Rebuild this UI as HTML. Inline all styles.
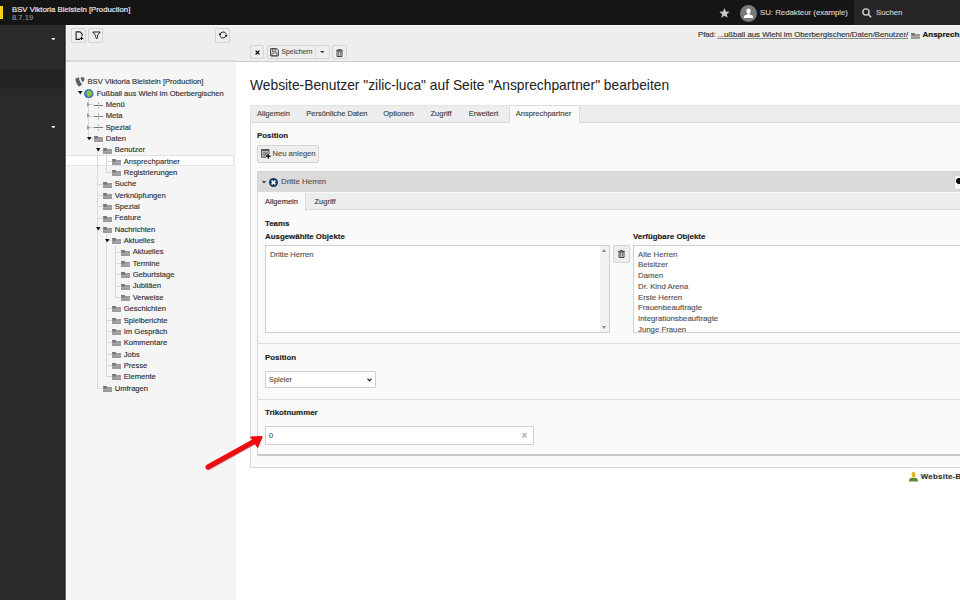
<!DOCTYPE html>
<html><head><meta charset="utf-8">
<style>
*{box-sizing:border-box;margin:0;padding:0}
html,body{width:960px;height:600px;overflow:hidden;background:#fff;font-family:"Liberation Sans",sans-serif;font-size:8px;color:#333;position:relative}
.a{position:absolute}
.t{position:absolute;white-space:nowrap;-webkit-text-stroke:0.15px currentColor}
</style></head><body>
<div class="a" style="left:0px;top:0px;width:960px;height:25px;background:#151515"></div>
<div class="a" style="left:0px;top:6px;width:3px;height:13px;background:#f4d21b"></div>
<div class="t" style="left:12px;top:5.74px;font-size:7.75px;line-height:7.75px;color:#f0f0f0;font-weight:normal;">BSV Viktoria Bielstein [Production]</div>
<div class="t" style="left:12px;top:13.57px;font-size:7.6px;line-height:7.6px;color:#8f8f8f;font-weight:normal;">8.7.19</div>
<svg class="a" style="left:719px;top:8px" width="11" height="10" viewBox="0 0 24 22"><path d="M12 0l3.1 7.6 8.2.6-6.3 5.3 2 8-7-4.4-7 4.4 2-8L.7 8.2l8.2-.6z" fill="#c8c8c8"/></svg>
<svg class="a" style="left:740px;top:5px" width="17" height="17" viewBox="0 0 16 16"><circle cx="8" cy="8" r="8" fill="#7a7a7a"/><path d="M8 3.2c1.3 0 2 .9 2 2.2 0 1.2-.6 2.4-1.1 2.9v.6c2 .4 3.4 1 3.4 2v1.4H3.7v-1.4c0-1 1.4-1.6 3.4-2v-.6C6.6 7.8 6 6.6 6 5.4 6 4.1 6.7 3.2 8 3.2z" fill="#fff"/></svg>
<div class="t" style="left:760px;top:9.20px;font-size:7.8px;line-height:7.8px;color:#cfcfcf;font-weight:normal;">SU: Redakteur (example)</div>
<div class="a" style="left:854px;top:0px;width:106px;height:25px;background:#262626"></div>
<svg class="a" style="left:862px;top:8px" width="10" height="10" viewBox="0 0 10 10"><circle cx="4" cy="4" r="3.1" fill="none" stroke="#d0d0d0" stroke-width="1.4"/><path d="M6.2 6.2L9.2 9.2" stroke="#d0d0d0" stroke-width="1.6"/></svg>
<div class="t" style="left:876px;top:9.20px;font-size:7.8px;line-height:7.8px;color:#cfcfcf;font-weight:normal;">Suchen</div>
<div class="a" style="left:0px;top:25px;width:66px;height:575px;background:#2a2a2a"></div>
<div class="a" style="left:0px;top:69px;width:66px;height:20px;background:#232323"></div>
<div class="a" style="left:64px;top:25px;width:1px;height:575px;background:#1e1e1e"></div>
<div class="a" style="left:65px;top:25px;width:1px;height:575px;background:#6a6a6a"></div>
<svg class="a" style="left:50.8px;top:37.7px" width="4.7" height="2.5" viewBox="0 0 5 3"><path d="M0 0h5L2.5 3z" fill="#fff"/></svg>
<svg class="a" style="left:50.8px;top:125.6px" width="4.7" height="2.5" viewBox="0 0 5 3"><path d="M0 0h5L2.5 3z" fill="#fff"/></svg>
<div class="a" style="left:66px;top:25px;width:170px;height:575px;background:#f5f5f5"></div>
<div class="a" style="left:66px;top:25px;width:170px;height:37px;background:#eeeeee;border-bottom:2px solid #d8d8d8;border-top:1px solid #fafafa"></div>
<div class="a" style="left:71px;top:28px;width:15px;height:15px;background:#eeeeee;border:1px solid #d4d4d4;border-radius:2px;"></div>
<div class="a" style="left:88px;top:28px;width:15px;height:15px;background:#eeeeee;border:1px solid #d4d4d4;border-radius:2px;"></div>
<div class="a" style="left:215px;top:28px;width:15px;height:15px;background:#eeeeee;border:1px solid #d4d4d4;border-radius:2px;"></div>
<svg class="a" style="left:74.5px;top:30.5px" width="9" height="9.5" viewBox="0 0 9 9.5"><path d="M5 8.4H1.1V.9h4l2 2v2.4" fill="none" stroke="#222" stroke-width="1.1" stroke-linejoin="round"/><path d="M6.5 5.7v3.6M4.7 7.5h3.6" stroke="#111" stroke-width="1.2"/></svg>
<svg class="a" style="left:91.5px;top:30.5px" width="9" height="9" viewBox="0 0 9 9"><path d="M.8 1h7.4L5.6 4.2C5.4 5.5 5.5 7 4.8 7.9 4 7.3 3.6 5.8 3.4 4.2z" fill="none" stroke="#222" stroke-width="1" stroke-linejoin="round"/></svg>
<svg class="a" style="left:217.6px;top:30px" width="10" height="10" viewBox="0 0 10 10"><path d="M2.1 4.4A3.1 3.1 0 0 1 8 3.9M7.9 5.6A3.1 3.1 0 0 1 2 6.1" fill="none" stroke="#222" stroke-width="1"/><circle cx="2" cy="4.4" r="1.1" fill="#111"/><circle cx="8.3" cy="5.6" r="1.1" fill="#111"/></svg>
<div class="a" style="left:66px;top:155.2px;width:168px;height:11.1px;background:#fff;border:1px solid #e2e2e2;border-left:none"></div>
<div class="a" style="left:88.4px;top:98.1px;width:1px;height:40.4px;background:#d9d9d9"></div>
<div class="a" style="left:97.4px;top:143.5px;width:1px;height:244.5px;background:#d9d9d9"></div>
<div class="a" style="left:106.4px;top:154.8px;width:1px;height:17.7px;background:#d9d9d9"></div>
<div class="a" style="left:106.4px;top:234.2px;width:1px;height:142.4px;background:#d9d9d9"></div>
<div class="a" style="left:115.4px;top:245.6px;width:1px;height:51.7px;background:#d9d9d9"></div>
<svg class="a" style="left:75px;top:77px" width="10" height="9.5" viewBox="1.5 1.3 13.2 13.2"><path d="M11.355 10.374c-.183.05-.334.072-.53.072-1.617 0-3.993-5.646-3.993-7.527 0-.693.165-.924.397-1.122C5.254 2.028 2.85 2.76 2.08 3.702c-.165.232-.263.594-.263 1.056 0 2.936 3.135 9.6 5.35 9.6 1.023 0 2.75-1.682 4.188-3.984M10.32 1.5c2.05 0 4.1.33 4.1 1.485 0 2.343-1.485 5.18-2.245 5.18-1.353 0-3.035-3.763-3.035-5.645 0-.858.33-1.022 1.18-1.022" fill="#5f5f5f"/></svg>
<div class="t" style="left:87.5px;top:78.37px;font-size:7.6px;line-height:7.6px;color:#333;font-weight:normal;">BSV Viktoria Bielstein [Production]</div>
<svg class="a" style="left:78.0px;top:91.3px" width="4.5" height="3.5" viewBox="0 0 4 3"><path d="M0 0h4L2 3z" fill="#111"/></svg>
<svg class="a" style="left:84.2px;top:88.5px" width="9.5" height="9.5" viewBox="0 0 10 10"><circle cx="5" cy="5" r="4.8" fill="#4a80c0"/><path d="M3.2 2.2C4.6 1.2 7.2 1.6 8 3.4 8.6 5 7.8 7.2 6 8 4.6 8.3 3.2 7.2 3 5.6 2.8 4.3 2.6 3 3.2 2.2z" fill="#8cc63a"/><circle cx="5" cy="5" r="4.6" fill="none" stroke="#2e5f95" stroke-width=".5"/></svg>
<div class="t" style="left:96.7px;top:89.71px;font-size:7.6px;line-height:7.6px;color:#333;font-weight:normal;">Fußball aus Wiehl im Oberbergischen</div>
<div class="a" style="left:88.4px;top:104.2px;width:5.5px;height:1px;background:#d9d9d9"></div>
<svg class="a" style="left:87.2px;top:102.0px" width="3" height="5" viewBox="0 0 3 5"><path d="M0 0v5L3 2.5z" fill="#999"/></svg>
<svg class="a" style="left:94.0px;top:101.5px" width="9" height="7" viewBox="0 0 9 7"><rect x="0" y="3" width="9" height="1" fill="#777"/><rect x="4" y="0.5" width="1" height="1.5" fill="#999"/><rect x="4" y="5" width="1" height="1.5" fill="#999"/></svg>
<div class="t" style="left:105.7px;top:101.05px;font-size:7.6px;line-height:7.6px;color:#333;font-weight:normal;">Menü</div>
<div class="a" style="left:88.4px;top:115.5px;width:5.5px;height:1px;background:#d9d9d9"></div>
<svg class="a" style="left:87.2px;top:113.3px" width="3" height="5" viewBox="0 0 3 5"><path d="M0 0v5L3 2.5z" fill="#999"/></svg>
<svg class="a" style="left:94.0px;top:112.8px" width="9" height="7" viewBox="0 0 9 7"><rect x="0" y="3" width="9" height="1" fill="#777"/><rect x="4" y="0.5" width="1" height="1.5" fill="#999"/><rect x="4" y="5" width="1" height="1.5" fill="#999"/></svg>
<div class="t" style="left:105.7px;top:112.39px;font-size:7.6px;line-height:7.6px;color:#333;font-weight:normal;">Meta</div>
<div class="a" style="left:88.4px;top:126.9px;width:5.5px;height:1px;background:#d9d9d9"></div>
<svg class="a" style="left:87.2px;top:124.7px" width="3" height="5" viewBox="0 0 3 5"><path d="M0 0v5L3 2.5z" fill="#999"/></svg>
<svg class="a" style="left:94.0px;top:124.2px" width="9" height="7" viewBox="0 0 9 7"><rect x="0" y="3" width="9" height="1" fill="#777"/><rect x="4" y="0.5" width="1" height="1.5" fill="#999"/><rect x="4" y="5" width="1" height="1.5" fill="#999"/></svg>
<div class="t" style="left:105.7px;top:123.73px;font-size:7.6px;line-height:7.6px;color:#333;font-weight:normal;">Spezial</div>
<div class="a" style="left:88.4px;top:138.2px;width:5.5px;height:1px;background:#d9d9d9"></div>
<svg class="a" style="left:87.0px;top:136.7px" width="4.5" height="3.5" viewBox="0 0 4 3"><path d="M0 0h4L2 3z" fill="#111"/></svg>
<svg class="a" style="left:94.0px;top:136.2px" width="9" height="6" viewBox="0 0 9 6"><rect x="0" y="1" width="9" height="5" fill="#9a9a9a"/><rect x="0" y="0" width="4" height="1.3" fill="#777"/><rect x="1" y="1.6" width="2.5" height="0.8" fill="#555"/><rect x="0" y="3" width="9" height="0.5" fill="#b5b5b5"/></svg>
<div class="t" style="left:105.7px;top:135.07px;font-size:7.6px;line-height:7.6px;color:#333;font-weight:normal;">Daten</div>
<div class="a" style="left:97.4px;top:149.5px;width:5.5px;height:1px;background:#d9d9d9"></div>
<svg class="a" style="left:96.0px;top:148.0px" width="4.5" height="3.5" viewBox="0 0 4 3"><path d="M0 0h4L2 3z" fill="#111"/></svg>
<svg class="a" style="left:103.0px;top:147.5px" width="9" height="6" viewBox="0 0 9 6"><rect x="0" y="1" width="9" height="5" fill="#9a9a9a"/><rect x="0" y="0" width="4" height="1.3" fill="#777"/><rect x="1" y="1.6" width="2.5" height="0.8" fill="#555"/><rect x="0" y="3" width="9" height="0.5" fill="#b5b5b5"/></svg>
<div class="t" style="left:114.7px;top:146.41px;font-size:7.6px;line-height:7.6px;color:#333;font-weight:normal;">Benutzer</div>
<div class="a" style="left:106.4px;top:160.9px;width:5.5px;height:1px;background:#d9d9d9"></div>
<svg class="a" style="left:112.0px;top:158.9px" width="9" height="6" viewBox="0 0 9 6"><rect x="0" y="1" width="9" height="5" fill="#9a9a9a"/><rect x="0" y="0" width="4" height="1.3" fill="#777"/><rect x="1" y="1.6" width="2.5" height="0.8" fill="#555"/><rect x="0" y="3" width="9" height="0.5" fill="#b5b5b5"/></svg>
<div class="t" style="left:123.7px;top:157.75px;font-size:7.6px;line-height:7.6px;color:#333;font-weight:normal;">Ansprechpartner</div>
<div class="a" style="left:106.4px;top:172.2px;width:5.5px;height:1px;background:#d9d9d9"></div>
<svg class="a" style="left:112.0px;top:170.2px" width="9" height="6" viewBox="0 0 9 6"><rect x="0" y="1" width="9" height="5" fill="#9a9a9a"/><rect x="0" y="0" width="4" height="1.3" fill="#777"/><rect x="1" y="1.6" width="2.5" height="0.8" fill="#555"/><rect x="0" y="3" width="9" height="0.5" fill="#b5b5b5"/></svg>
<div class="t" style="left:123.7px;top:169.09px;font-size:7.6px;line-height:7.6px;color:#333;font-weight:normal;">Registrierungen</div>
<div class="a" style="left:97.4px;top:183.6px;width:5.5px;height:1px;background:#d9d9d9"></div>
<svg class="a" style="left:103.0px;top:181.6px" width="9" height="6" viewBox="0 0 9 6"><rect x="0" y="1" width="9" height="5" fill="#9a9a9a"/><rect x="0" y="0" width="4" height="1.3" fill="#777"/><rect x="1" y="1.6" width="2.5" height="0.8" fill="#555"/><rect x="0" y="3" width="9" height="0.5" fill="#b5b5b5"/></svg>
<div class="t" style="left:114.7px;top:180.43px;font-size:7.6px;line-height:7.6px;color:#333;font-weight:normal;">Suche</div>
<div class="a" style="left:97.4px;top:194.9px;width:5.5px;height:1px;background:#d9d9d9"></div>
<svg class="a" style="left:103.0px;top:192.9px" width="9" height="6" viewBox="0 0 9 6"><rect x="0" y="1" width="9" height="5" fill="#9a9a9a"/><rect x="0" y="0" width="4" height="1.3" fill="#777"/><rect x="1" y="1.6" width="2.5" height="0.8" fill="#555"/><rect x="0" y="3" width="9" height="0.5" fill="#b5b5b5"/></svg>
<div class="t" style="left:114.7px;top:191.77px;font-size:7.6px;line-height:7.6px;color:#333;font-weight:normal;">Verknüpfungen</div>
<div class="a" style="left:97.4px;top:206.2px;width:5.5px;height:1px;background:#d9d9d9"></div>
<svg class="a" style="left:103.0px;top:204.2px" width="9" height="6" viewBox="0 0 9 6"><rect x="0" y="1" width="9" height="5" fill="#9a9a9a"/><rect x="0" y="0" width="4" height="1.3" fill="#777"/><rect x="1" y="1.6" width="2.5" height="0.8" fill="#555"/><rect x="0" y="3" width="9" height="0.5" fill="#b5b5b5"/></svg>
<div class="t" style="left:114.7px;top:203.11px;font-size:7.6px;line-height:7.6px;color:#333;font-weight:normal;">Spezial</div>
<div class="a" style="left:97.4px;top:217.6px;width:5.5px;height:1px;background:#d9d9d9"></div>
<svg class="a" style="left:103.0px;top:215.6px" width="9" height="6" viewBox="0 0 9 6"><rect x="0" y="1" width="9" height="5" fill="#9a9a9a"/><rect x="0" y="0" width="4" height="1.3" fill="#777"/><rect x="1" y="1.6" width="2.5" height="0.8" fill="#555"/><rect x="0" y="3" width="9" height="0.5" fill="#b5b5b5"/></svg>
<div class="t" style="left:114.7px;top:214.45px;font-size:7.6px;line-height:7.6px;color:#333;font-weight:normal;">Feature</div>
<div class="a" style="left:97.4px;top:228.9px;width:5.5px;height:1px;background:#d9d9d9"></div>
<svg class="a" style="left:96.0px;top:227.4px" width="4.5" height="3.5" viewBox="0 0 4 3"><path d="M0 0h4L2 3z" fill="#111"/></svg>
<svg class="a" style="left:103.0px;top:226.9px" width="9" height="6" viewBox="0 0 9 6"><rect x="0" y="1" width="9" height="5" fill="#9a9a9a"/><rect x="0" y="0" width="4" height="1.3" fill="#777"/><rect x="1" y="1.6" width="2.5" height="0.8" fill="#555"/><rect x="0" y="3" width="9" height="0.5" fill="#b5b5b5"/></svg>
<div class="t" style="left:114.7px;top:225.79px;font-size:7.6px;line-height:7.6px;color:#333;font-weight:normal;">Nachrichten</div>
<div class="a" style="left:106.4px;top:240.3px;width:5.5px;height:1px;background:#d9d9d9"></div>
<svg class="a" style="left:105.0px;top:238.8px" width="4.5" height="3.5" viewBox="0 0 4 3"><path d="M0 0h4L2 3z" fill="#111"/></svg>
<svg class="a" style="left:112.0px;top:238.3px" width="9" height="6" viewBox="0 0 9 6"><rect x="0" y="1" width="9" height="5" fill="#9a9a9a"/><rect x="0" y="0" width="4" height="1.3" fill="#777"/><rect x="1" y="1.6" width="2.5" height="0.8" fill="#555"/><rect x="0" y="3" width="9" height="0.5" fill="#b5b5b5"/></svg>
<div class="t" style="left:123.7px;top:237.13px;font-size:7.6px;line-height:7.6px;color:#333;font-weight:normal;">Aktuelles</div>
<div class="a" style="left:115.4px;top:251.6px;width:5.5px;height:1px;background:#d9d9d9"></div>
<svg class="a" style="left:121.0px;top:249.6px" width="9" height="6" viewBox="0 0 9 6"><rect x="0" y="1" width="9" height="5" fill="#9a9a9a"/><rect x="0" y="0" width="4" height="1.3" fill="#777"/><rect x="1" y="1.6" width="2.5" height="0.8" fill="#555"/><rect x="0" y="3" width="9" height="0.5" fill="#b5b5b5"/></svg>
<div class="t" style="left:132.7px;top:248.47px;font-size:7.6px;line-height:7.6px;color:#333;font-weight:normal;">Aktuelles</div>
<div class="a" style="left:115.4px;top:262.9px;width:5.5px;height:1px;background:#d9d9d9"></div>
<svg class="a" style="left:121.0px;top:260.9px" width="9" height="6" viewBox="0 0 9 6"><rect x="0" y="1" width="9" height="5" fill="#9a9a9a"/><rect x="0" y="0" width="4" height="1.3" fill="#777"/><rect x="1" y="1.6" width="2.5" height="0.8" fill="#555"/><rect x="0" y="3" width="9" height="0.5" fill="#b5b5b5"/></svg>
<div class="t" style="left:132.7px;top:259.81px;font-size:7.6px;line-height:7.6px;color:#333;font-weight:normal;">Termine</div>
<div class="a" style="left:115.4px;top:274.3px;width:5.5px;height:1px;background:#d9d9d9"></div>
<svg class="a" style="left:121.0px;top:272.3px" width="9" height="6" viewBox="0 0 9 6"><rect x="0" y="1" width="9" height="5" fill="#9a9a9a"/><rect x="0" y="0" width="4" height="1.3" fill="#777"/><rect x="1" y="1.6" width="2.5" height="0.8" fill="#555"/><rect x="0" y="3" width="9" height="0.5" fill="#b5b5b5"/></svg>
<div class="t" style="left:132.7px;top:271.15px;font-size:7.6px;line-height:7.6px;color:#333;font-weight:normal;">Geburtstage</div>
<div class="a" style="left:115.4px;top:285.6px;width:5.5px;height:1px;background:#d9d9d9"></div>
<svg class="a" style="left:121.0px;top:283.6px" width="9" height="6" viewBox="0 0 9 6"><rect x="0" y="1" width="9" height="5" fill="#9a9a9a"/><rect x="0" y="0" width="4" height="1.3" fill="#777"/><rect x="1" y="1.6" width="2.5" height="0.8" fill="#555"/><rect x="0" y="3" width="9" height="0.5" fill="#b5b5b5"/></svg>
<div class="t" style="left:132.7px;top:282.49px;font-size:7.6px;line-height:7.6px;color:#333;font-weight:normal;">Jubiläen</div>
<div class="a" style="left:115.4px;top:297.0px;width:5.5px;height:1px;background:#d9d9d9"></div>
<svg class="a" style="left:121.0px;top:295.0px" width="9" height="6" viewBox="0 0 9 6"><rect x="0" y="1" width="9" height="5" fill="#9a9a9a"/><rect x="0" y="0" width="4" height="1.3" fill="#777"/><rect x="1" y="1.6" width="2.5" height="0.8" fill="#555"/><rect x="0" y="3" width="9" height="0.5" fill="#b5b5b5"/></svg>
<div class="t" style="left:132.7px;top:293.83px;font-size:7.6px;line-height:7.6px;color:#333;font-weight:normal;">Verweise</div>
<div class="a" style="left:106.4px;top:308.3px;width:5.5px;height:1px;background:#d9d9d9"></div>
<svg class="a" style="left:112.0px;top:306.3px" width="9" height="6" viewBox="0 0 9 6"><rect x="0" y="1" width="9" height="5" fill="#9a9a9a"/><rect x="0" y="0" width="4" height="1.3" fill="#777"/><rect x="1" y="1.6" width="2.5" height="0.8" fill="#555"/><rect x="0" y="3" width="9" height="0.5" fill="#b5b5b5"/></svg>
<div class="t" style="left:123.7px;top:305.17px;font-size:7.6px;line-height:7.6px;color:#333;font-weight:normal;">Geschichten</div>
<div class="a" style="left:106.4px;top:319.6px;width:5.5px;height:1px;background:#d9d9d9"></div>
<svg class="a" style="left:112.0px;top:317.6px" width="9" height="6" viewBox="0 0 9 6"><rect x="0" y="1" width="9" height="5" fill="#9a9a9a"/><rect x="0" y="0" width="4" height="1.3" fill="#777"/><rect x="1" y="1.6" width="2.5" height="0.8" fill="#555"/><rect x="0" y="3" width="9" height="0.5" fill="#b5b5b5"/></svg>
<div class="t" style="left:123.7px;top:316.51px;font-size:7.6px;line-height:7.6px;color:#333;font-weight:normal;">Spielberichte</div>
<div class="a" style="left:106.4px;top:331.0px;width:5.5px;height:1px;background:#d9d9d9"></div>
<svg class="a" style="left:112.0px;top:329.0px" width="9" height="6" viewBox="0 0 9 6"><rect x="0" y="1" width="9" height="5" fill="#9a9a9a"/><rect x="0" y="0" width="4" height="1.3" fill="#777"/><rect x="1" y="1.6" width="2.5" height="0.8" fill="#555"/><rect x="0" y="3" width="9" height="0.5" fill="#b5b5b5"/></svg>
<div class="t" style="left:123.7px;top:327.85px;font-size:7.6px;line-height:7.6px;color:#333;font-weight:normal;">Im Gespräch</div>
<div class="a" style="left:106.4px;top:342.3px;width:5.5px;height:1px;background:#d9d9d9"></div>
<svg class="a" style="left:112.0px;top:340.3px" width="9" height="6" viewBox="0 0 9 6"><rect x="0" y="1" width="9" height="5" fill="#9a9a9a"/><rect x="0" y="0" width="4" height="1.3" fill="#777"/><rect x="1" y="1.6" width="2.5" height="0.8" fill="#555"/><rect x="0" y="3" width="9" height="0.5" fill="#b5b5b5"/></svg>
<div class="t" style="left:123.7px;top:339.19px;font-size:7.6px;line-height:7.6px;color:#333;font-weight:normal;">Kommentare</div>
<div class="a" style="left:106.4px;top:353.7px;width:5.5px;height:1px;background:#d9d9d9"></div>
<svg class="a" style="left:112.0px;top:351.7px" width="9" height="6" viewBox="0 0 9 6"><rect x="0" y="1" width="9" height="5" fill="#9a9a9a"/><rect x="0" y="0" width="4" height="1.3" fill="#777"/><rect x="1" y="1.6" width="2.5" height="0.8" fill="#555"/><rect x="0" y="3" width="9" height="0.5" fill="#b5b5b5"/></svg>
<div class="t" style="left:123.7px;top:350.53px;font-size:7.6px;line-height:7.6px;color:#333;font-weight:normal;">Jobs</div>
<div class="a" style="left:106.4px;top:365.0px;width:5.5px;height:1px;background:#d9d9d9"></div>
<svg class="a" style="left:112.0px;top:363.0px" width="9" height="6" viewBox="0 0 9 6"><rect x="0" y="1" width="9" height="5" fill="#9a9a9a"/><rect x="0" y="0" width="4" height="1.3" fill="#777"/><rect x="1" y="1.6" width="2.5" height="0.8" fill="#555"/><rect x="0" y="3" width="9" height="0.5" fill="#b5b5b5"/></svg>
<div class="t" style="left:123.7px;top:361.87px;font-size:7.6px;line-height:7.6px;color:#333;font-weight:normal;">Presse</div>
<div class="a" style="left:106.4px;top:376.3px;width:5.5px;height:1px;background:#d9d9d9"></div>
<svg class="a" style="left:112.0px;top:374.3px" width="9" height="6" viewBox="0 0 9 6"><rect x="0" y="1" width="9" height="5" fill="#9a9a9a"/><rect x="0" y="0" width="4" height="1.3" fill="#777"/><rect x="1" y="1.6" width="2.5" height="0.8" fill="#555"/><rect x="0" y="3" width="9" height="0.5" fill="#b5b5b5"/></svg>
<div class="t" style="left:123.7px;top:373.21px;font-size:7.6px;line-height:7.6px;color:#333;font-weight:normal;">Elemente</div>
<div class="a" style="left:97.4px;top:387.7px;width:5.5px;height:1px;background:#d9d9d9"></div>
<svg class="a" style="left:103.0px;top:385.7px" width="9" height="6" viewBox="0 0 9 6"><rect x="0" y="1" width="9" height="5" fill="#9a9a9a"/><rect x="0" y="0" width="4" height="1.3" fill="#777"/><rect x="1" y="1.6" width="2.5" height="0.8" fill="#555"/><rect x="0" y="3" width="9" height="0.5" fill="#b5b5b5"/></svg>
<div class="t" style="left:114.7px;top:384.55px;font-size:7.6px;line-height:7.6px;color:#333;font-weight:normal;">Umfragen</div>
<div class="a" style="left:236px;top:25px;width:724px;height:37px;background:#eeeeee;border-bottom:1px solid #cbcbcb;border-top:1px solid #fafafa"></div>
<div class="t" style="left:698px;top:30.78px;font-size:7.7px;line-height:7.7px;color:#333;font-weight:normal;">Pfad: </div>
<div class="t" style="left:717.5px;top:30.70px;font-size:7.8px;line-height:7.8px;color:#333;font-weight:normal;"><span style="text-decoration:underline;text-decoration-color:#8a8a8a">...ußball aus Wiehl im Oberbergischen/Daten/Benutzer/</span></div>
<svg class="a" style="left:910.8px;top:32.5px" width="9" height="6" viewBox="0 0 9 6"><rect x="0" y="1" width="9" height="5" fill="#9a9a9a"/><rect x="0" y="0" width="4" height="1.3" fill="#777"/><rect x="1" y="1.6" width="2.5" height="0.8" fill="#555"/><rect x="0" y="3" width="9" height="0.5" fill="#b5b5b5"/></svg>
<div class="t" style="left:922.5px;top:30.53px;font-size:8px;line-height:8px;color:#111;font-weight:bold;">Ansprechpartner</div>
<div class="a" style="left:249.5px;top:44.8px;width:14.5px;height:14.5px;background:#eeeeee;border:1px solid #d4d4d4;border-radius:2px;"></div>
<div class="a" style="left:267.3px;top:44.8px;width:62.5px;height:14.5px;background:#eeeeee;border:1px solid #d4d4d4;border-radius:2px;"></div>
<div class="a" style="left:332.3px;top:44.8px;width:14.5px;height:14.5px;background:#eeeeee;border:1px solid #d4d4d4;border-radius:2px;"></div>
<div class="t" style="left:281.4px;top:48.86px;font-size:6.9px;line-height:6.9px;color:#555;font-weight:normal;">Speichern</div>
<div class="a" style="left:314.9px;top:45.3px;width:1px;height:13.5px;background:#d8d8d8"></div>
<svg class="a" style="left:254.5px;top:49.8px" width="5" height="5" viewBox="0 0 5 5"><path d="M.6 .6l3.8 3.8M4.4 .6L.6 4.4" stroke="#000" stroke-width="1.3"/></svg>
<svg class="a" style="left:270px;top:48px" width="9" height="8.5" viewBox="0 0 9 8.5"><path d="M.6 .6h6.2l1.6 1.6v5.7H.6z" fill="none" stroke="#444" stroke-width="1"/><rect x="2.3" y="1" width="3.6" height="2.2" fill="none" stroke="#444" stroke-width=".8"/><rect x="2" y="5" width="5" height="2.9" fill="none" stroke="#444" stroke-width=".8"/></svg>
<svg class="a" style="left:320px;top:51.3px" width="4.6" height="2.2" viewBox="0 0 4 2"><path d="M0 0h4L2 2z" fill="#333"/></svg>
<svg class="a" style="left:336px;top:48.5px" width="7" height="8" viewBox="0 0 7 8"><path d="M0 1.3h7M2.3 1.3V.5h2.4v.8" fill="none" stroke="#444" stroke-width=".9"/><path d="M1 2.2h5v5.3H1z" fill="none" stroke="#444" stroke-width="1"/><path d="M2.6 3v3.8M4.4 3v3.8" stroke="#444" stroke-width=".8"/></svg>
<div class="t" style="left:250px;top:77.73px;font-size:14.5px;line-height:14.5px;color:#222;font-weight:normal;transform:scaleX(0.952);transform-origin:0 0;-webkit-text-stroke:0">Website-Benutzer "zilic-luca" auf Seite "Ansprechpartner" bearbeiten</div>
<div class="a" style="left:249.5px;top:104.7px;width:720px;height:17.5px;background:#ededed;border:1px solid #e3e3e3;border-bottom:none"></div>
<div class="a" style="left:249.5px;top:122px;width:720px;height:346px;background:#fafafa;border:1px solid #d9d9d9"></div>
<div class="a" style="left:508.75px;top:105px;width:71px;height:18px;background:#fafafa;border:1px solid #dcdcdc;border-bottom:none"></div>
<div class="t" style="left:257px;top:109.90px;font-size:7.5px;line-height:7.5px;color:#444;font-weight:normal;">Allgemein</div>
<div class="t" style="left:306.25px;top:109.90px;font-size:7.5px;line-height:7.5px;color:#444;font-weight:normal;">Persönliche Daten</div>
<div class="t" style="left:383.25px;top:109.90px;font-size:7.5px;line-height:7.5px;color:#444;font-weight:normal;">Optionen</div>
<div class="t" style="left:430.5px;top:109.90px;font-size:7.5px;line-height:7.5px;color:#444;font-weight:normal;">Zugriff</div>
<div class="t" style="left:468.75px;top:109.90px;font-size:7.5px;line-height:7.5px;color:#444;font-weight:normal;">Erweitert</div>
<div class="t" style="left:515.75px;top:109.90px;font-size:7.5px;line-height:7.5px;color:#444;font-weight:normal;">Ansprechpartner</div>
<div class="t" style="left:257px;top:132.01px;font-size:7.9px;line-height:7.9px;color:#222;font-weight:bold;">Position</div>
<div class="a" style="left:256.7px;top:144.5px;width:62.5px;height:18px;background:#eeeeee;border:1px solid #d4d4d4;border-radius:2px;"></div>
<div class="t" style="left:272.5px;top:149.87px;font-size:7.6px;line-height:7.6px;color:#555;font-weight:normal;">Neu anlegen</div>
<svg class="a" style="left:260.8px;top:149.2px" width="10" height="9.5" viewBox="0 0 10 9.5"><path d="M.5 .5h7.5v4.5" fill="none" stroke="#555" stroke-width="1"/><rect x=".5" y=".5" width="7.5" height="1.6" fill="#555"/><path d="M.5 .5v7.8h4.5" fill="none" stroke="#555" stroke-width="1"/><rect x="1.5" y="2.6" width="5.5" height="5" fill="#8a8a8a"/><path d="M7.3 5.2v4.3M5.2 7.3h4.3" stroke="#111" stroke-width="1.4"/></svg>
<div class="a" style="left:257.25px;top:171.3px;width:710px;height:285px;background:#fafafa;border:1px solid #d4d4d4;border-bottom:2px solid #c9c9c9"></div>
<div class="a" style="left:258.25px;top:172.3px;width:710px;height:20.2px;background:#dadada"></div>
<svg class="a" style="left:262px;top:181px" width="4" height="3" viewBox="0 0 4 3"><path d="M0 0h4L2 2.5z" fill="#333"/></svg>
<svg class="a" style="left:268.5px;top:177.5px" width="9" height="9" viewBox="0 0 9 9"><circle cx="4.5" cy="4.5" r="4.5" fill="#0f3b67"/><path d="M2.6 2.6l3.8 3.8M6.4 2.6l-3.8 3.8" stroke="#fff" stroke-width="1.5"/></svg>
<div class="t" style="left:281px;top:178.31px;font-size:7.9px;line-height:7.9px;color:#555;font-weight:normal;">Dritte Herren</div>
<div class="a" style="left:953.8px;top:175px;width:10px;height:15px;background:#f4f4f4;border:1px solid #d6d6d6;border-radius:2px"></div>
<div class="a" style="left:955.5px;top:178.2px;width:7px;height:6px;border-radius:50%;background:#000"></div>
<div class="a" style="left:258.25px;top:192.5px;width:710px;height:17.5px;background:#ededed;border-bottom:1px solid #dadada"></div>
<div class="a" style="left:258.25px;top:192.5px;width:47.8px;height:18.5px;background:#fafafa;border-right:1px solid #dadada"></div>
<div class="t" style="left:265px;top:197.65px;font-size:7.5px;line-height:7.5px;color:#333;font-weight:normal;">Allgemein</div>
<div class="t" style="left:314.5px;top:197.65px;font-size:7.5px;line-height:7.5px;color:#444;font-weight:normal;">Zugriff</div>
<div class="t" style="left:265px;top:219.61px;font-size:7.9px;line-height:7.9px;color:#222;font-weight:bold;">Teams</div>
<div class="t" style="left:265px;top:232.61px;font-size:7.9px;line-height:7.9px;color:#222;font-weight:bold;">Ausgewählte Objekte</div>
<div class="t" style="left:633px;top:232.61px;font-size:7.9px;line-height:7.9px;color:#222;font-weight:bold;">Verfügbare Objekte</div>
<div class="a" style="left:265px;top:245px;width:344.5px;height:88px;background:#fff;border:1px solid #d0d0d0"></div>
<div class="a" style="left:600px;top:246px;width:8.5px;height:86px;background:#f1f1f1"></div>
<svg class="a" style="left:602px;top:249px" width="4" height="3" viewBox="0 0 4 3"><path d="M0 3h4L2 0z" fill="#888"/></svg>
<svg class="a" style="left:602px;top:326px" width="4" height="3" viewBox="0 0 4 3"><path d="M0 0h4L2 3z" fill="#888"/></svg>
<div class="t" style="left:270px;top:250.57px;font-size:7.6px;line-height:7.6px;color:#555;font-weight:normal;">Dritte Herren</div>
<div class="a" style="left:613px;top:245px;width:16.5px;height:18px;background:#eeeeee;border:1px solid #d4d4d4;border-radius:2px;"></div>
<svg class="a" style="left:617.8px;top:250.2px" width="7" height="8" viewBox="0 0 7 8"><path d="M0 1.3h7M2.3 1.3V.5h2.4v.8" fill="none" stroke="#444" stroke-width=".9"/><path d="M1 2.2h5v5.3H1z" fill="none" stroke="#444" stroke-width="1"/><path d="M2.6 3v3.8M4.4 3v3.8" stroke="#444" stroke-width=".8"/></svg>
<div class="a" style="left:633.2px;top:245px;width:340px;height:88px;background:#fff;border:1px solid #d0d0d0"></div>
<div class="t" style="left:638px;top:250.60px;font-size:7.8px;line-height:7.8px;color:#555;font-weight:normal;">Alte Herren</div>
<div class="t" style="left:638px;top:261.35px;font-size:7.8px;line-height:7.8px;color:#555;font-weight:normal;">Beisitzer</div>
<div class="t" style="left:638px;top:272.10px;font-size:7.8px;line-height:7.8px;color:#555;font-weight:normal;">Damen</div>
<div class="t" style="left:638px;top:282.85px;font-size:7.8px;line-height:7.8px;color:#555;font-weight:normal;">Dr. Kind Arena</div>
<div class="t" style="left:638px;top:293.60px;font-size:7.8px;line-height:7.8px;color:#555;font-weight:normal;">Erste Herren</div>
<div class="t" style="left:638px;top:304.35px;font-size:7.8px;line-height:7.8px;color:#555;font-weight:normal;">Frauenbeauftragte</div>
<div class="t" style="left:638px;top:315.10px;font-size:7.8px;line-height:7.8px;color:#555;font-weight:normal;">Integrationsbeauftragte</div>
<div class="t" style="left:638px;top:325.85px;font-size:7.8px;line-height:7.8px;color:#555;font-weight:normal;">Junge Frauen</div>
<div class="a" style="left:258.25px;top:343px;width:710px;height:1px;background:#dedede"></div>
<div class="t" style="left:265px;top:353.81px;font-size:7.9px;line-height:7.9px;color:#222;font-weight:bold;">Position</div>
<div class="a" style="left:265.2px;top:371.3px;width:111.2px;height:17px;background:#fff;border:1px solid #cfcfcf;border-radius:1px"></div>
<div class="t" style="left:269px;top:376.04px;font-size:7.4px;line-height:7.4px;color:#555;font-weight:normal;">Spieler</div>
<svg class="a" style="left:366.8px;top:377.6px" width="5" height="4" viewBox="0 0 5 4"><path d="M.5 .7L2.5 2.8L4.5 .7" fill="none" stroke="#222" stroke-width="1.2"/></svg>
<div class="a" style="left:258.25px;top:399px;width:710px;height:1px;background:#dedede"></div>
<div class="t" style="left:265px;top:409.31px;font-size:7.9px;line-height:7.9px;color:#222;font-weight:bold;">Trikotnummer</div>
<div class="a" style="left:265.2px;top:426.3px;width:269px;height:18.5px;background:#fff;border:1px solid #cfcfcf;border-radius:1px"></div>
<div class="t" style="left:269px;top:431.74px;font-size:7.4px;line-height:7.4px;color:#555;font-weight:normal;">0</div>
<div class="t" style="left:521.5px;top:431.04px;font-size:10px;line-height:10px;color:#9a9a9a;font-weight:normal;">×</div>
<svg class="a" style="left:908px;top:471px" width="11" height="11" viewBox="0 0 11 11"><path d="M3.5 6.8 C1.5 7.3 1 8.5 1 10.5H10C10 8.5 9.5 7.3 7.5 6.8z" fill="#5b8a2f"/><ellipse cx="5.5" cy="3.5" rx="2" ry="2.7" fill="#e8b624"/></svg>
<div class="t" style="left:920.8px;top:472.71px;font-size:7.9px;line-height:7.9px;color:#333;font-weight:bold;letter-spacing:0.25px">Website-Benutzer</div>
<svg class="a" style="left:200px;top:425px" width="70" height="50" viewBox="0 0 70 50"><g transform="translate(0.4,0.8)" opacity="0.35"><path d="M8 42 L54 16.5" stroke="#700" stroke-width="5" stroke-linecap="round"/><path d="M62 11.7 L50.8 12 L57.5 22z" fill="#700" stroke="#700" stroke-width="1" stroke-linejoin="round"/></g><path d="M8 42 L54 16.5" stroke="#ee0c12" stroke-width="5" stroke-linecap="round"/><path d="M62 11.7 L50.8 12 L57.5 22z" fill="#ee0c12" stroke="#ee0c12" stroke-width="1.2" stroke-linejoin="round"/></svg>
</body></html>
